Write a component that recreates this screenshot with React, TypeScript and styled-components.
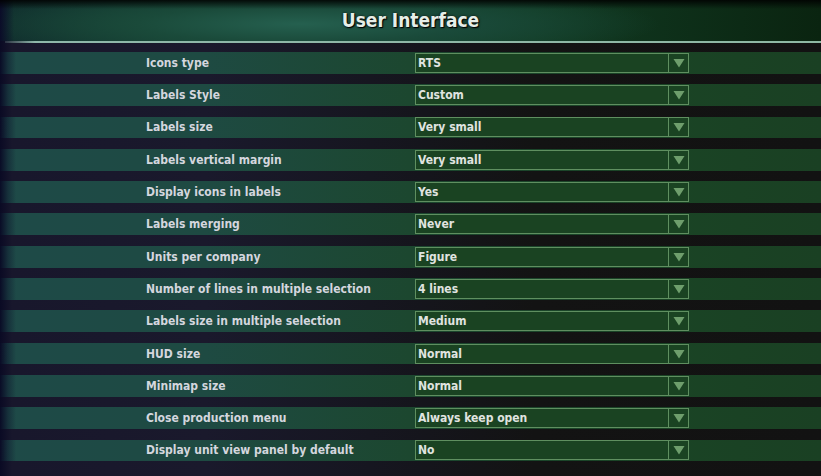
import React from "react";
import styled, { createGlobalStyle } from "styled-components";

const GlobalStyle = createGlobalStyle`
  html, body {
    margin: 0;
    padding: 0;
    background: #111111;
  }
`;

const Screen = styled.div`
  width: 821px;
  height: 476px;
  overflow: hidden;
  background:
    linear-gradient(90deg, #0a0a24 0, #18172c 12px, #1a192c 25%, #161620 45%, #131313 65%, #121212 100%);
  font-family: "DejaVu Sans Condensed", "DejaVu Sans", sans-serif;
  display: flex;
  flex-direction: column;
`;

const Header = styled.div`
  height: 41px;
  box-sizing: border-box;
  display: flex;
  align-items: center;
  justify-content: center;
  padding-bottom: 2px;
  background:
    linear-gradient(180deg, rgba(0, 0, 0, 0.85) 0, rgba(0, 0, 0, 0) 9px),
    linear-gradient(90deg, rgba(10, 10, 40, 0.95) 0, rgba(10, 10, 40, 0) 14px),
    radial-gradient(ellipse 360px 40px at 300px 24px, #25604f 0, #1a4a3a 45%, rgba(20, 60, 40, 0) 100%),
    linear-gradient(90deg, #0f2a2c 0, #13402e 30%, #113a22 65%, #0a2410 100%);
`;

const Title = styled.h1`
  margin: 0;
  font-size: 19px;
  font-weight: bold;
  color: #e6eee8;
  text-shadow: 1px 1px 1px #000, 0 0 3px rgba(0, 0, 0, 0.8);
`;

const Divider = styled.div`
  height: 2px;
  margin-left: 5px;
  background: linear-gradient(90deg, rgba(140, 180, 170, 0.2) 0, #8fb8aa 30px, #8fb8a4 100%);
`;

const List = styled.div`
  display: flex;
  flex-direction: column;
  gap: 10.5px;
  padding-top: 9px;
`;

const Row = styled.div`
  height: 21.8px;
  display: grid;
  grid-template-columns: 146px 269px 274px 1fr;
  align-items: center;
  background:
    linear-gradient(90deg, rgba(8, 8, 36, 0.95) 0, rgba(10, 10, 40, 0.4) 8px, rgba(10, 10, 40, 0) 16px),
    linear-gradient(90deg, #1e4a48 0, #1e4a42 25%, #1c472f 50%, #1a4425 80%, #1a4023 100%);
`;

const Label = styled.span`
  grid-column: 2;
  font-size: 12px;
  font-weight: bold;
  color: #d4d6de;
  white-space: nowrap;
`;

const Select = styled.div`
  grid-column: 3;
  height: 20px;
  box-sizing: border-box;
  border: 1px solid #5f8f60;
  background: #1a4322;
  display: flex;
  align-items: stretch;
`;

const Value = styled.span`
  flex: 1;
  padding-left: 2px;
  font-size: 12px;
  font-weight: bold;
  color: #e0e4e0;
  line-height: 18px;
  white-space: nowrap;
`;

const ArrowBox = styled.span`
  width: 19px;
  border-left: 1px solid #5f8f60;
  display: flex;
  align-items: center;
  justify-content: center;
`;

const Arrow = () => (
  <svg width="12" height="10" viewBox="0 0 12 10">
    <polygon points="0.5,1 11.5,1 6,9.5" fill="#6e9e6c" />
  </svg>
);

const settings: [string, string][] = [
  ["Icons type", "RTS"],
  ["Labels Style", "Custom"],
  ["Labels size", "Very small"],
  ["Labels vertical margin", "Very small"],
  ["Display icons in labels", "Yes"],
  ["Labels merging", "Never"],
  ["Units per company", "Figure"],
  ["Number of lines in multiple selection", "4 lines"],
  ["Labels size in multiple selection", "Medium"],
  ["HUD size", "Normal"],
  ["Minimap size", "Normal"],
  ["Close production menu", "Always keep open"],
  ["Display unit view panel by default", "No"],
];

const App = () => (
  <>
    <GlobalStyle />
    <Screen>
      <Header>
        <Title>User Interface</Title>
      </Header>
      <Divider />
      <List>
        {settings.map(([label, value]) => (
          <Row key={label}>
            <Label>{label}</Label>
            <Select>
              <Value>{value}</Value>
              <ArrowBox>
                <Arrow />
              </ArrowBox>
            </Select>
          </Row>
        ))}
      </List>
    </Screen>
  </>
);

export default App;
